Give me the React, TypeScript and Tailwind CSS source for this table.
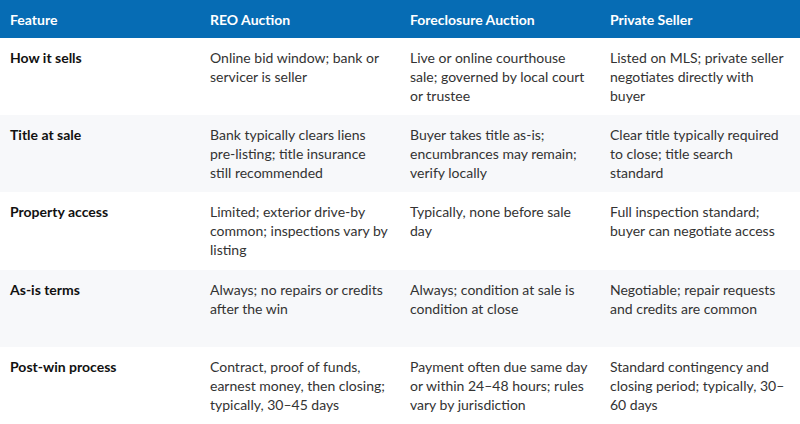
const columns = ["Feature", "REO Auction", "Foreclosure Auction", "Private Seller"]

type Row = {
    feature: string
    cells: string[][]
}

const rows: Row[] = [
    {
        feature: "How it sells",
        cells: [
            ["Online bid window; bank or", "servicer is seller"],
            ["Live or online courthouse", "sale; governed by local court", "or trustee"],
            ["Listed on MLS; private seller", "negotiates directly with", "buyer"],
        ],
    },
    {
        feature: "Title at sale",
        cells: [
            ["Bank typically clears liens", "pre-listing; title insurance", "still recommended"],
            ["Buyer takes title as-is;", "encumbrances may remain;", "verify locally"],
            ["Clear title typically required", "to close; title search", "standard"],
        ],
    },
    {
        feature: "Property access",
        cells: [
            ["Limited; exterior drive-by", "common; inspections vary by", "listing"],
            ["Typically, none before sale", "day"],
            ["Full inspection standard;", "buyer can negotiate access"],
        ],
    },
    {
        feature: "As-is terms",
        cells: [
            ["Always; no repairs or credits", "after the win"],
            ["Always; condition at sale is", "condition at close"],
            ["Negotiable; repair requests", "and credits are common"],
        ],
    },
    {
        feature: "Post-win process",
        cells: [
            ["Contract, proof of funds,", "earnest money, then closing;", "typically, 30\u201345 days"],
            ["Payment often due same day", "or within 24\u201348 hours; rules", "vary by jurisdiction"],
            ["Standard contingency and", "closing period; typically, 30\u2013", "60 days"],
        ],
    },
]

function Lines({lines}: {lines: string[]}) {
    return (
        <>
            {lines.map((l, i) => (
                <span key={i} className="block whitespace-nowrap">{l}</span>
            ))}
        </>
    )
}

export default function App() {
    return (
        <div className="flex flex-col w-[800px] h-[424px] bg-white font-['Lato','Noto_Sans',sans-serif] text-[14px] leading-[19px]">
            <div className="grid grid-cols-4 h-[38px] shrink-0 bg-[#066cb4] text-white font-bold">
                {columns.map((c) => (
                    <div key={c} className="flex items-center px-[10px]">{c}</div>
                ))}
            </div>
            {rows.map((r, i) => (
                <div
                    key={r.feature}
                    className={`grid grid-cols-4 flex-1 pt-[10px] ${i % 2 === 1 ? "bg-[#f7f8fa]" : "bg-white"}`}
                >
                    <div className="px-[10px] font-bold text-[#111111]">{r.feature}</div>
                    {r.cells.map((cell, j) => (
                        <div key={j} className="px-[10px] text-[#333333]">
                            <Lines lines={cell}/>
                        </div>
                    ))}
                </div>
            ))}
        </div>
    )
}
